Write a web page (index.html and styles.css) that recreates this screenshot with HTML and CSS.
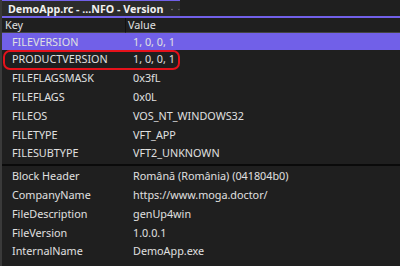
FILE: index.html
```html
<!DOCTYPE html>
<html>
<head>
<meta charset="utf-8">
<link rel="stylesheet" href="styles.css">
</head>
<body>
<div class="window">
  <div class="tabstrip">
    <div class="tab">
      <span class="tab-title">DemoApp.rc - ...NFO - Version</span>
      <svg class="pin" width="9" height="9" viewBox="0 0 9 9"><path d="M0.5 4.5H3M3 2V7M3 2.5H7.5V6.5H3M3 5.5H7.5" fill="none" stroke="#d0d0d0" stroke-width="1"/></svg>
      <svg class="close" width="9" height="9" viewBox="0 0 9 9"><path d="M1 1L8 8M8 1L1 8" fill="none" stroke="#d0d0d0" stroke-width="1.2"/></svg>
    </div>
  </div>
  <div class="accent"></div>
  <div class="grid">
    <div class="head key-col">Key</div>
    <div class="head val-col">Value</div>
    <div class="rows">
      <div class="row selected"><span class="k">FILEVERSION</span><span class="v">1, 0, 0, 1</span></div>
      <div class="row marked"><span class="k">PRODUCTVERSION</span><span class="v">1, 0, 0, 1</span><span class="ring"></span></div>
      <div class="row"><span class="k">FILEFLAGSMASK</span><span class="v">0x3fL</span></div>
      <div class="row"><span class="k">FILEFLAGS</span><span class="v">0x0L</span></div>
      <div class="row"><span class="k">FILEOS</span><span class="v">VOS_NT_WINDOWS32</span></div>
      <div class="row"><span class="k">FILETYPE</span><span class="v">VFT_APP</span></div>
      <div class="row"><span class="k">FILESUBTYPE</span><span class="v">VFT2_UNKNOWN</span></div>
      <div class="sep"></div>
      <div class="row"><span class="k">Block Header</span><span class="v">Română (România) (041804b0)</span></div>
      <div class="row"><span class="k">CompanyName</span><span class="v">https://www.moga.doctor/</span></div>
      <div class="row"><span class="k">FileDescription</span><span class="v">genUp4win</span></div>
      <div class="row"><span class="k">FileVersion</span><span class="v">1.0.0.1</span></div>
      <div class="row"><span class="k">InternalName</span><span class="v">DemoApp.exe</span></div>
      <div class="row"><span class="k">LegalCopyright</span><span class="v">Copyright (C) 2024 Stefan-Mihai MOGA - All rights reserved.</span></div>
    </div>
  </div>
</div>
</body>
</html>
```
FILE: styles.css
```css
html, body {
  margin: 0;
  padding: 0;
  background: #1f1f1f;
  overflow: hidden;
}
body {
  width: 400px;
  height: 266px;
  font-family: "Noto Sans", "Open Sans", sans-serif;
  font-size: 10.8px;
  color: #e0e0e0;
}
.window {
  border-left: 2px solid #3a3a3a;
  height: 266px;
  box-sizing: border-box;
  overflow: hidden;
}
.tabstrip {
  height: 16px;
  display: flex;
  background: #1f1f1f;
}
.tab {
  width: 178px;
  background: #2b2b2b;
  border-top: 1px solid #7160e8;
  display: flex;
  align-items: center;
  padding-left: 6px;
  padding-top: 1px;
  box-sizing: border-box;
}
.tab-title {
  font-weight: bold;
  font-size: 10.7px;
  color: #f0f0f0;
  white-space: nowrap;
}
.pin { margin-left: 8px; }
.close { margin-left: 5px; }
.accent {
  height: 2px;
  background: #7160e8;
}
.grid {
  display: grid;
  grid-template-columns: 124px 1fr;
}
.head {
  height: 14px;
  line-height: 14px;
  border-bottom: 1px solid #444;
  background: #1f1f1f;
  white-space: nowrap;
}
.key-col {
  padding-left: 3px;
  border-right: 1px solid #111;
}
.val-col { padding-left: 2px; }
.rows {
  grid-column: 1 / 3;
}
.row {
  position: relative;
  height: 18.8px;
  display: grid;
  grid-template-columns: 131px 1fr;
  align-items: center;
  white-space: nowrap;
  line-height: 14px;
}
.row:first-child { height: 17px; }
.k { padding-left: 10px; }
.selected { background: #7160e8; }
.sep {
  height: 2px;
  margin: 1px 0 1px;
  background: #0a0a0a;
}
.ring {
  position: absolute;
  left: 1px;
  top: 0px;
  width: 177px;
  height: 20px;
  border: 2px solid #e5121b;
  border-radius: 7px;
  box-sizing: border-box;
}
```
